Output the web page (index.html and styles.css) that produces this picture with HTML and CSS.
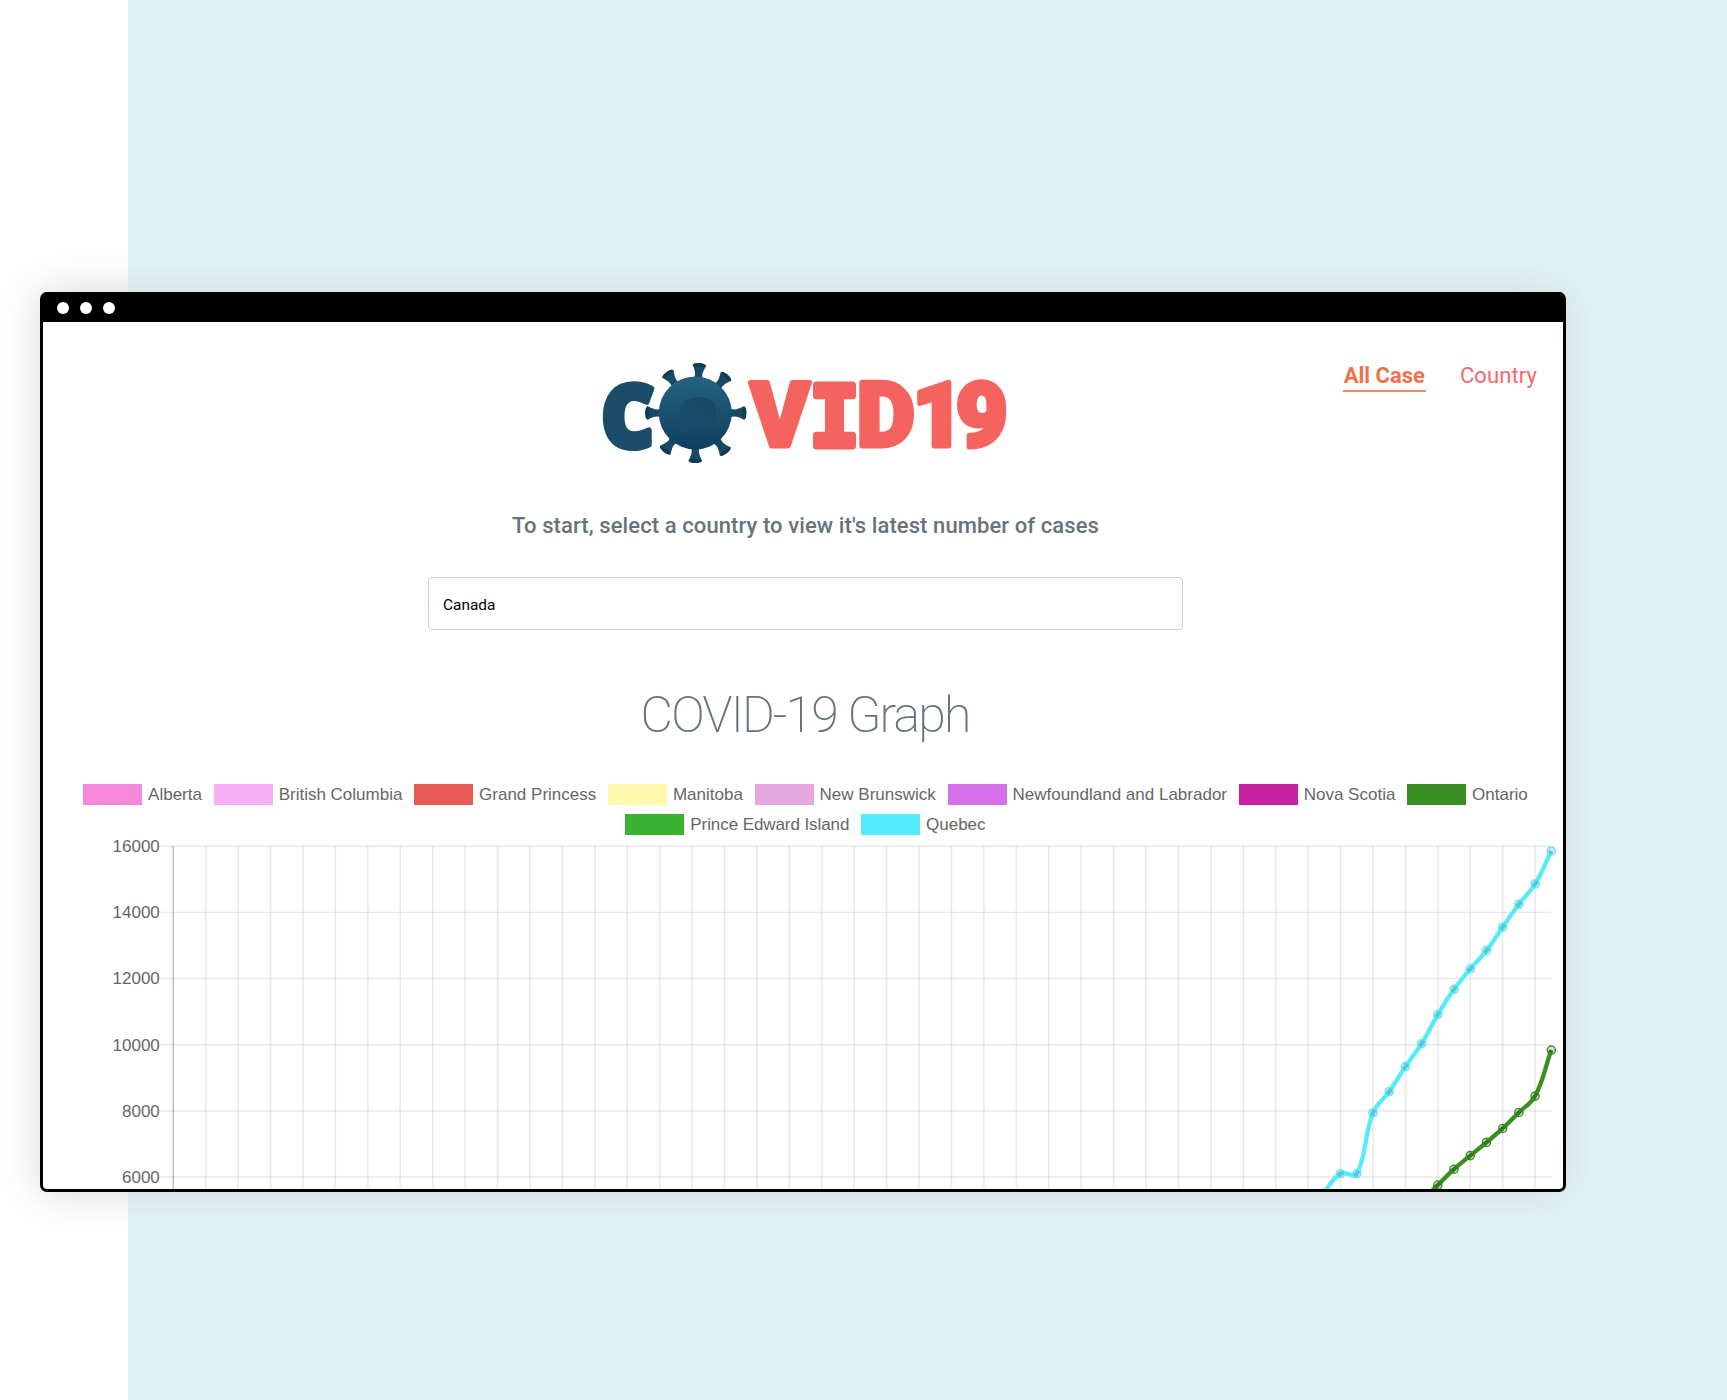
FILE: index.html
```html
<!DOCTYPE html>
<html lang="en">
<head>
<meta charset="utf-8">
<title>COVID19 Graph</title>
<link rel="stylesheet" href="styles.css">
</head>
<body>
<main class="stage">
  <section class="window">
    <div class="titlebar"><i class="dot"></i><i class="dot"></i><i class="dot"></i></div>
    <div class="page">
      <header class="header">
        <svg class="logo" width="410" height="130" viewBox="0 -20 410 130">
          <defs>
            <linearGradient id="body" x1="0" y1="0" x2="0" y2="1">
              <stop offset="0" stop-color="#256283"/><stop offset="1" stop-color="#0f3f5e"/>
            </linearGradient>
            <linearGradient id="core" x1="1" y1="0" x2="0" y2="1">
              <stop offset="0" stop-color="#164660"/><stop offset=".5" stop-color="#1a4d68"/><stop offset="1" stop-color="#164b6a"/>
            </linearGradient>
            <g id="spike">
              <path d="M-4.3 -33 C-3 -38 -3.4 -40 -7 -47 Q0 -51 7 -47 C3.4 -40 3 -38 4.3 -33Z" fill="#174864"/>
              <ellipse cx="0" cy="-47.2" rx="6.2" ry="1.9" fill="#103a53"/>
            </g>
          </defs>
          <text class="logo-c" transform="translate(.5 85.5) scale(.94 1)">C</text>
          <g transform="translate(94.3 52)">
            <use href="#spike" transform="rotate(5) translate(0 -1)"/>
            <use href="#spike" transform="rotate(40) translate(0 -1)"/>
            <use href="#spike" transform="rotate(90) translate(0 -2)"/>
            <use href="#spike" transform="rotate(142) translate(0 -2)"/>
            <use href="#spike" transform="rotate(180) translate(0 -1)"/>
            <use href="#spike" transform="rotate(219) translate(0 -1)"/>
            <use href="#spike" transform="rotate(270) translate(0 -1)"/>
            <use href="#spike" transform="rotate(325) translate(0 -1)"/>
            <circle r="36.5" fill="url(#body)"/>
            <path d="M-10 -12 C-4 -17 9 -17 15 -13 C22 -9 22 1 20 6 C17 13 9 10 1 13 C-5 16 -10 21 -16 17 C-22 14 -19 6 -17 1 C-15 -4 -14 -9 -10 -12Z" fill="url(#core)"/>
          </g>
          <text class="logo-vid" y="85"><tspan x="149.5">V</tspan><tspan class="slab" x="208.5">I</tspan><tspan x="256">D</tspan><tspan x="311.5">1</tspan><tspan x="355">9</tspan></text>
        </svg>
        <nav class="nav"><a class="link active">All Case</a><a class="link">Country</a></nav>
      </header>
      <p class="intro">To start, select a country to view it's latest number of cases</p>
      <div class="select">Canada</div>
      <h1 class="heading">COVID-19 Graph</h1>
      <div class="legend">
        <div class="row">
          <span class="item"><i class="swatch alberta"></i>Alberta</span>
          <span class="item"><i class="swatch bc"></i>British Columbia</span>
          <span class="item"><i class="swatch princess"></i>Grand Princess</span>
          <span class="item"><i class="swatch manitoba"></i>Manitoba</span>
          <span class="item"><i class="swatch brunswick"></i>New Brunswick</span>
          <span class="item"><i class="swatch labrador"></i>Newfoundland and Labrador</span>
          <span class="item"><i class="swatch scotia"></i>Nova Scotia</span>
          <span class="item"><i class="swatch ontario"></i>Ontario</span>
        </div>
        <div class="row">
          <span class="item tight"><i class="swatch pei"></i>Prince Edward Island</span>
          <span class="item"><i class="swatch quebec"></i>Quebec</span>
        </div>
      </div>
      <svg class="chart" id="chart" width="1520" height="353" viewBox="0 0 1520 353"></svg>
    </div>
  </section>
</main>
<script src="chart.js"></script>
</body>
</html>
```
FILE: styles.css
```css
* { box-sizing: border-box; }
body { margin: 0; background: #fff; font-family: Roboto, sans-serif; }
.stage {
  height: 1400px;
  padding: 292px 0 0 40px;
  background: linear-gradient(to right, #fff 128px, #dff4f7 128px);
  overflow: hidden;
}
.window {
  width: 1526px;
  height: 900px;
  display: flex;
  flex-direction: column;
  border: 3px solid #000;
  border-top: 0;
  border-radius: 7px;
  background: #000;
  overflow: hidden;
  box-shadow: 0 0 44px rgba(214, 214, 214, 1);
}
.titlebar {
  flex: none;
  height: 29.5px;
  display: flex;
  align-items: center;
  gap: 11.2px;
  padding: 1.5px 0 0 14px;
  background: #000;
}
.dot { width: 12px; height: 12px; border-radius: 50%; background: #fff; }
.page { flex: 1; display: flex; flex-direction: column; align-items: center; background: #fff; overflow: hidden; min-height: 0; }
.header { flex: none; align-self: stretch; height: 148px; display: grid; grid-template-columns: 557.5px 410px 1fr; align-items: start; padding-top: 19.5px; }
.logo { grid-column: 2; }
.logo-c { font: 800 86px "Open Sans", sans-serif; stroke-width: 6px; stroke-linejoin: round; }
.logo-vid { font: 900 89px Roboto, sans-serif; stroke-width: 5px; stroke-linejoin: round; }
.logo-c { fill: #1b4d68; stroke: #1b4d68; }
.logo-vid { fill: #f5635e; stroke: #f5635e; }
.slab { font-family: "DejaVu Sans Mono", monospace; font-weight: 700; font-size: 83px; stroke-width: 7px; }
.nav { display: flex; justify-content: flex-end; align-items: flex-start; gap: 34px; padding: 21.3px 26px 0 0; }
.link { font-size: 22px; line-height: 28px; letter-spacing: .1px; color: #f4686a; }
.active { font-weight: 700; letter-spacing: 0; color: #f3714a; padding: 0 1px; border-bottom: 2px solid #f58a6b; }
.intro { margin: 42px 0 0 5px; font-size: 22px; font-weight: 500; line-height: 28px; letter-spacing: .09px; color: #66737d; }
.select {
  flex: none;
  width: 755px;
  height: 53px;
  margin: 37px 0 0 5px;
  padding: 2px 0 0 14px;
  border: 1.5px solid #cfcfcf;
  border-radius: 4px;
  font-size: 15.4px;
  line-height: 51px;
  color: #000;
}
.heading { margin: 53px 0 0 4px; font-size: 50px; font-weight: 200; line-height: 64px; letter-spacing: -1.85px; color: #66737d; }
.legend { flex: none; display: flex; flex-direction: column; gap: 9px; margin: 37px 0 0 5px; font: 17px/21px "Liberation Sans", sans-serif; color: #666; }
.row { display: flex; justify-content: center; gap: 11.8px; }
.item { display: flex; gap: 5.9px; white-space: nowrap; }
.tight { letter-spacing: -.08px; }
.swatch { width: 59px; height: 21px; }
.alberta { background: #f688da; }
.bc { background: #f7aff6; }
.princess { background: #ea5a54; }
.manitoba { background: #fff7ac; }
.brunswick { background: #e6a6de; }
.labrador { background: #d570e9; }
.scotia { background: #c721a0; }
.ontario { background: #3a8e22; }
.pei { background: #38b230; }
.quebec { background: #56ebfb; }
.chart { flex: none; display: block; margin-top: 1px; }
.grid { stroke: rgba(0, 0, 0, .09); stroke-width: 1.5; }
.axis { stroke: rgba(0, 0, 0, .25); stroke-width: 1.5; }
.tick { font: 17px "Liberation Sans", sans-serif; fill: #666; text-anchor: end; }
.line { fill: none; stroke-width: 4.3; }
.point { fill: rgba(0, 0, 0, .13); stroke-width: 1.4; }
```
FILE: chart.js
```js
const svg = document.getElementById('chart');
const left = 130.3, right = 1508.3, top0 = 10.3, step = 66.15, days = 85;
const dx = (right - left) / days;
const yOf = v => top0 + (16000 - v) / 2000 * step;

function add(tag, attrs, text) {
  const el = document.createElementNS('http://www.w3.org/2000/svg', tag);
  for (const k in attrs) el.setAttribute(k, attrs[k]);
  if (text !== undefined) el.textContent = text;
  svg.appendChild(el);
}

for (let i = 0; i < 6; i++) {
  const y = top0 + i * step;
  add('line', { class: 'grid', x1: left - 13, x2: right, y1: y, y2: y });
  add('text', { class: 'tick', x: left - 13.5, y: y + 5.8 }, 16000 - i * 2000);
}
for (let d = 0; d < days; d += 2) {
  const x = left + d * dx;
  add('line', { class: d ? 'grid' : 'axis', x1: x, x2: x, y1: top0, y2: 400 });
}

// Spline through the latest daily totals; handles sized by neighbour distance.
function series(values, color) {
  const pts = values.map((v, i) => ({ x: right - (values.length - 1 - i) * dx, y: yOf(v) }));
  const ctl = pts.map((p, i) => {
    const a = pts[i - 1] || p, b = pts[i + 1] || p;
    const d0 = Math.hypot(p.x - a.x, p.y - a.y), d1 = Math.hypot(b.x - p.x, b.y - p.y);
    const f0 = 0.4 * d0 / (d0 + d1), f1 = 0.4 * d1 / (d0 + d1);
    return {
      px: p.x - f0 * (b.x - a.x), py: p.y - f0 * (b.y - a.y),
      nx: p.x + f1 * (b.x - a.x), ny: p.y + f1 * (b.y - a.y)
    };
  });
  let d = `M${pts[0].x} ${pts[0].y}`;
  for (let i = 1; i < pts.length; i++) {
    d += `C${ctl[i - 1].nx} ${ctl[i - 1].ny} ${ctl[i].px} ${ctl[i].py} ${pts[i].x} ${pts[i].y}`;
  }
  add('path', { class: 'line', d, stroke: color });
  pts.forEach(p => add('circle', { class: 'point', cx: p.x, cy: p.y, r: 4.1, stroke: color }));
}

series([4726, 5276, 5759, 6237, 6648, 7049, 7470, 7953, 8447, 9840], '#3a8e22');
series([4611, 5518, 6101, 6101, 7944, 8580, 9340, 10031, 10912, 11677, 12292, 12846, 13557, 14248, 14860, 15857], '#56ebfb');
```
